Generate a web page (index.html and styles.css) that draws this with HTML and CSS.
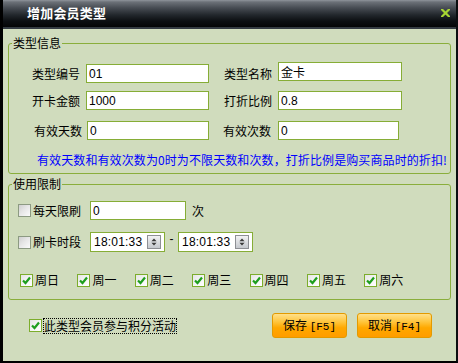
FILE: index.html
```html
<!DOCTYPE html>
<html lang="zh">
<head>
<meta charset="utf-8">
<title>增加会员类型</title>
<link rel="stylesheet" href="styles.css">
</head>
<body>
<div class="window">
  <div class="titlebar">
    <span class="title">增加会员类型</span>
    <svg class="close" width="9" height="8" viewBox="0 0 9 8"><path d="M1 0.5 L8 7.5 M8 0.5 L1 7.5" stroke="#a6d533" stroke-width="2.2" stroke-linecap="square"/></svg>
  </div>
  <div class="content">
    <fieldset class="group g1">
      <legend>类型信息</legend>
      <div class="form-row r1">
        <span class="lbl">类型编号</span><input class="txt" value="01">
        <span class="lbl lbl-r">类型名称</span><input class="txt txt-r" value="金卡">
      </div>
      <div class="form-row r2">
        <span class="lbl">开卡金额</span><input class="txt" value="1000">
        <span class="lbl lbl-r">打折比例</span><input class="txt txt-r" value="0.8">
      </div>
      <div class="form-row r3">
        <span class="lbl">有效天数</span><input class="txt" value="0">
        <span class="lbl lbl-r">有效次数</span><input class="txt txt-r" value="0">
      </div>
      <p class="note">有效天数和有效次数为0时为不限天数和次数，打折比例是购买商品时的折扣!</p>
    </fieldset>

    <fieldset class="group g2">
      <legend>使用限制</legend>
      <div class="limit-row l1">
        <span class="cb"></span><span class="cb-text">每天限刷</span>
        <input class="txt daily" value="0"><span class="unit">次</span>
      </div>
      <div class="limit-row l2">
        <span class="cb"></span><span class="cb-text">刷卡时段</span>
        <span class="time first"><span class="time-val">18:01:33</span><span class="spin"><svg width="14" height="14" viewBox="0 0 14 14"><path d="M4 6 L7 3 L10 6 Z M4 8 L7 11 L10 8 Z" fill="#3a3a3a"/></svg></span></span>
        <span class="dash">-</span>
        <span class="time"><span class="time-val">18:01:33</span><span class="spin"><svg width="14" height="14" viewBox="0 0 14 14"><path d="M4 6 L7 3 L10 6 Z M4 8 L7 11 L10 8 Z" fill="#3a3a3a"/></svg></span></span>
      </div>
      <div class="weekdays">
        <span class="day"><span class="cb on"><svg width="11" height="11" viewBox="0 0 11 11"><path d="M2 5.5 L4.5 8 L9 2.5" fill="none" stroke="#1e9e1e" stroke-width="2.2"/></svg></span><span class="cb-text">周日</span></span>
        <span class="day"><span class="cb on"><svg width="11" height="11" viewBox="0 0 11 11"><path d="M2 5.5 L4.5 8 L9 2.5" fill="none" stroke="#1e9e1e" stroke-width="2.2"/></svg></span><span class="cb-text">周一</span></span>
        <span class="day"><span class="cb on"><svg width="11" height="11" viewBox="0 0 11 11"><path d="M2 5.5 L4.5 8 L9 2.5" fill="none" stroke="#1e9e1e" stroke-width="2.2"/></svg></span><span class="cb-text">周二</span></span>
        <span class="day"><span class="cb on"><svg width="11" height="11" viewBox="0 0 11 11"><path d="M2 5.5 L4.5 8 L9 2.5" fill="none" stroke="#1e9e1e" stroke-width="2.2"/></svg></span><span class="cb-text">周三</span></span>
        <span class="day"><span class="cb on"><svg width="11" height="11" viewBox="0 0 11 11"><path d="M2 5.5 L4.5 8 L9 2.5" fill="none" stroke="#1e9e1e" stroke-width="2.2"/></svg></span><span class="cb-text">周四</span></span>
        <span class="day"><span class="cb on"><svg width="11" height="11" viewBox="0 0 11 11"><path d="M2 5.5 L4.5 8 L9 2.5" fill="none" stroke="#1e9e1e" stroke-width="2.2"/></svg></span><span class="cb-text">周五</span></span>
        <span class="day"><span class="cb on"><svg width="11" height="11" viewBox="0 0 11 11"><path d="M2 5.5 L4.5 8 L9 2.5" fill="none" stroke="#1e9e1e" stroke-width="2.2"/></svg></span><span class="cb-text">周六</span></span>
      </div>
    </fieldset>

    <div class="footer">
      <span class="points">
        <span class="cb on"><svg width="11" height="11" viewBox="0 0 11 11"><path d="M2 5.5 L4.5 8 L9 2.5" fill="none" stroke="#1e9e1e" stroke-width="2.2"/></svg></span><span class="cb-text focus">此类型会员参与积分活动</span>
      </span>
      <div class="buttons">
        <button class="btn">保存 <span class="key">[F5]</span></button>
        <button class="btn">取消 <span class="key">[F4]</span></button>
      </div>
    </div>
  </div>
</div>
</body>
</html>
```

FILE: styles.css
```css
* { box-sizing: border-box; }

html, body {
  margin: 0;
  padding: 0;
  background: #000;
}

body {
  font-family: "Noto Sans CJK SC", "Liberation Sans", sans-serif;
  font-size: 12px;
  color: #000;
}

.window {
  width: 458px;
  height: 363px;
  border-left: 3px solid #000;
  border-right: 2px solid #0b0d0f;
  border-bottom: 2px solid #000;
  background: #d0dcbd;
  display: flex;
  flex-direction: column;
}

.titlebar {
  height: 29px;
  flex: none;
  display: flex;
  align-items: center;
  justify-content: space-between;
  padding: 0 6px 2px 24px;
  border-bottom: 2px solid #343b42;
  background: linear-gradient(#8f949b 0, #6c7178 2px, #464b52 8px, #22272c 15px, #0c0f12 21px, #040506 27px);
}

.title {
  color: #fff;
  font-weight: bold;
  font-size: 13px;
  line-height: 16px;
  letter-spacing: 0.2px;
}

.close { display: block; }

.content {
  flex: 1;
  padding: 0 5px;
}

.group {
  margin: 0;
  padding: 0;
  border: 1px solid #8aae3c;
  border-radius: 3px;
  min-width: 0;
}

.group legend {
  margin-left: 3px;
  padding: 0 1px;
  font-size: 12px;
  line-height: 14px;
}

.g1 {
  margin-top: 7px;
  padding-top: 14px;
  padding-bottom: 6px;
}

.form-row {
  display: flex;
  align-items: center;
  height: 19px;
  padding-left: 23px;
}

.r2 { margin-top: 8px; }
.r3 { margin-top: 11px; }
.r3 .lbl:first-child { margin-left: 2px; margin-right: 5px; }
.r3 .txt { width: 122px; }
.r3 .lbl-r { margin-left: 14px; }
.r3 .txt-r { width: 121px; margin-left: 1px; }
.r1 .txt-r { transform: translateY(-2px); }

.lbl {
  width: 48px;
  margin-right: 6px;
  line-height: 14px;
  white-space: nowrap;
}

.lbl-r { margin-left: 15px; }

.txt {
  width: 123px;
  height: 19px;
  margin: 0;
  padding: 0 2px;
  border: 1px solid #86ad36;
  background: #fff;
  font-family: "Liberation Sans", "Noto Sans CJK SC", sans-serif;
  font-size: 12px;
  color: #000;
  outline: none;
}

.txt-r { width: 124px; }

.note {
  margin: 13px 0 0 28px;
  color: #0000ff;
  font-size: 12px;
  line-height: 14px;
  white-space: nowrap;
  letter-spacing: 0.1px;
}

.g2 {
  margin-top: 3px;
  padding-top: 10px;
  padding-bottom: 12px;
}

.limit-row {
  display: flex;
  align-items: center;
  padding-left: 9px;
}

.l1 { height: 19px; }
.l2 { height: 20px; margin-top: 12px; }

.cb {
  width: 13px;
  height: 13px;
  flex: none;
  border: 1px solid #8c9a82;
  background: linear-gradient(135deg, #cfcfcf 0%, #e6e6e6 45%, #fbfbfb 100%);
  display: inline-flex;
  align-items: center;
  justify-content: center;
}

.cb.on {
  border-color: #7cad2c;
  background: linear-gradient(135deg, #e4e4e4 0%, #f4f4f4 50%, #ffffff 100%);
}

.cb svg { display: block; }

.cb-text {
  margin-left: 2px;
  line-height: 14px;
  white-space: nowrap;
}

.daily {
  width: 96px;
  margin-left: 9px;
}

.unit { margin-left: 6px; }

.time {
  width: 75px;
  height: 20px;
  margin-left: 9px;
  border: 1px solid #86ad36;
  background: #fff;
  display: flex;
  align-items: center;
  justify-content: space-between;
  padding: 0 3px 0 3px;
  font-family: "Liberation Sans", sans-serif;
  font-size: 12px;
}

.time + .dash + .time { margin-left: 0; }

.time-val { letter-spacing: 0.2px; }

.spin {
  width: 14px;
  height: 14px;
  border: 1px solid #8d8f94;
  background: linear-gradient(#f2f2f4, #c5c8ce);
  display: flex;
  align-items: center;
  justify-content: center;
}

.spin svg { display: block; width: 12px; height: 12px; }

.dash {
  width: 13px;
  text-align: center;
  font-family: "Liberation Sans", sans-serif;
  align-self: flex-start;
  line-height: 14px;
}

.weekdays {
  display: flex;
  margin-top: 21px;
  padding-left: 11px;
  height: 14px;
  align-items: center;
}

.day {
  width: 57.4px;
  flex: none;
  display: flex;
  align-items: center;
}

.footer {
  margin-top: 13px;
  height: 25px;
  display: flex;
  align-items: center;
  justify-content: space-between;
  padding: 0 19px 0 21px;
}

.points {
  display: flex;
  align-items: center;
}

.focus {
  outline: 1px dotted #000;
  outline-offset: 0;
  padding: 0 0 0 0;
}

.buttons {
  display: flex;
  gap: 10px;
}

.btn {
  width: 75px;
  height: 25px;
  margin: 0;
  padding: 0;
  border: 1px solid #e39a00;
  border-radius: 3px;
  background: linear-gradient(#ffe08a 0%, #ffc43a 35%, #ffa800 60%, #ff9c00 100%);
  font-family: "Noto Sans CJK SC", sans-serif;
  font-size: 12px;
  color: #000;
  line-height: 14px;
}

.key {
  font-family: "Liberation Mono", monospace;
  font-size: 11px;
}
```
